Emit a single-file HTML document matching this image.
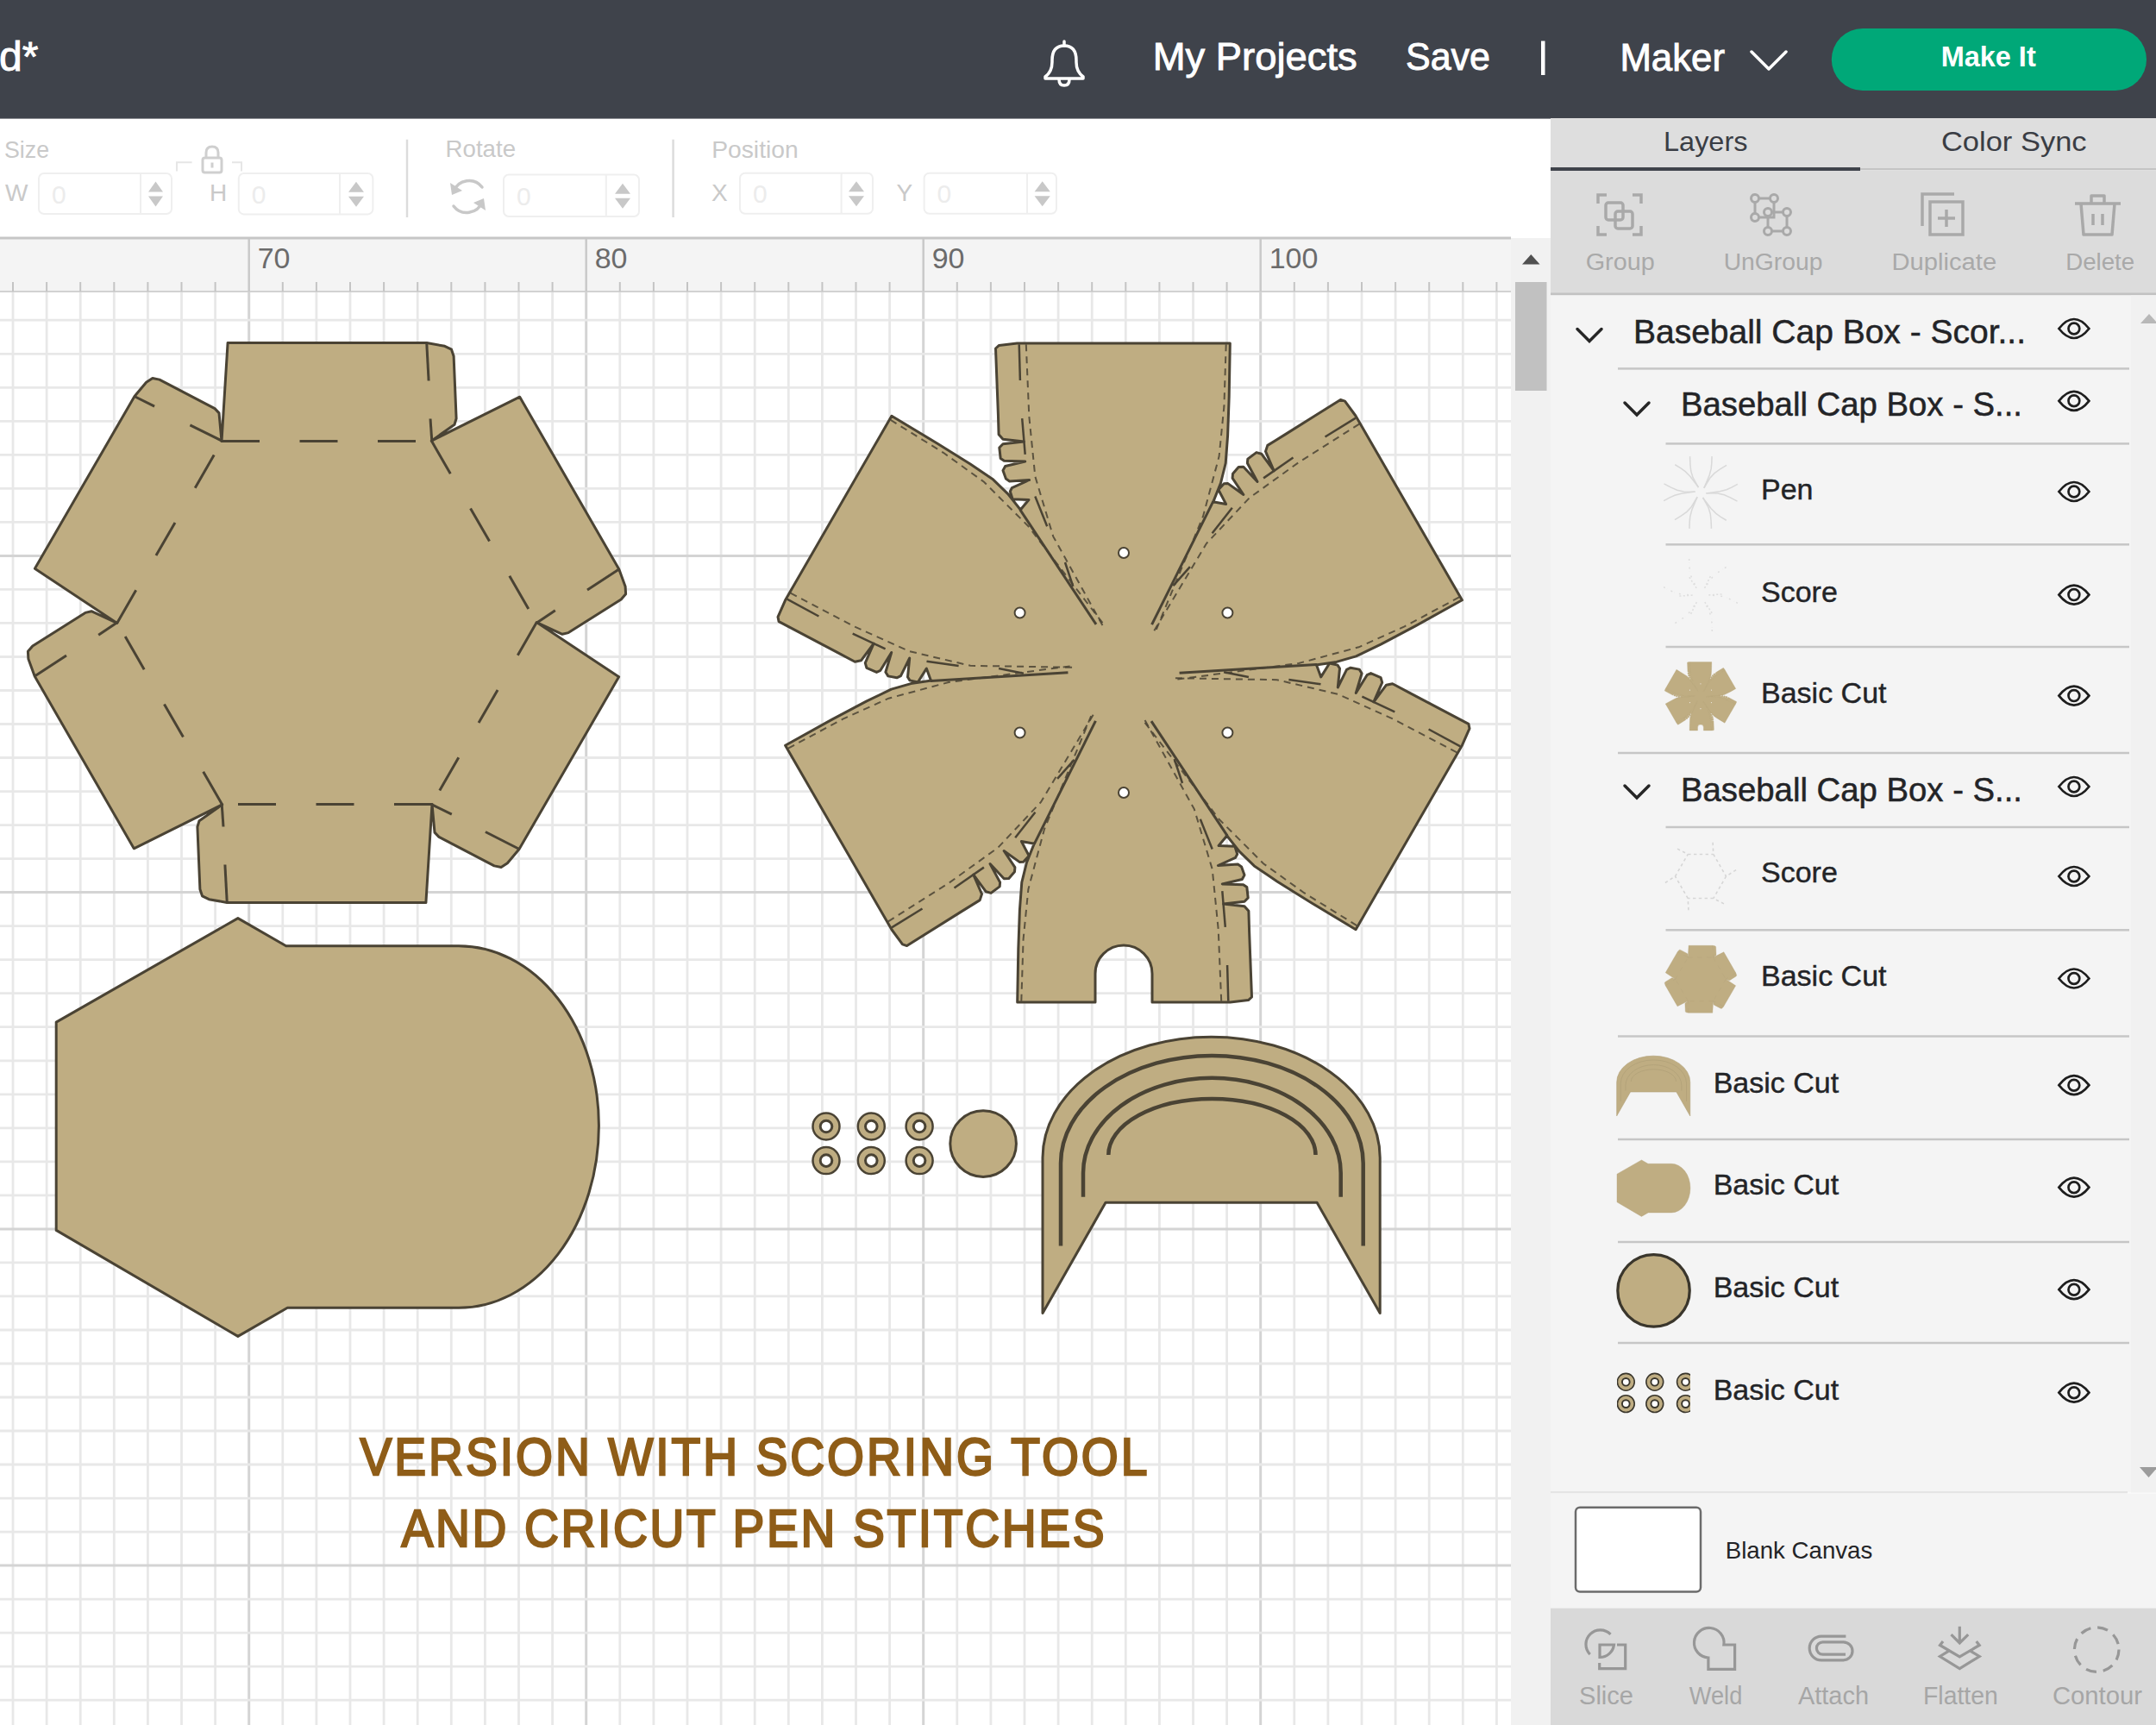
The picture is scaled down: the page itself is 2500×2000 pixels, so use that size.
<!DOCTYPE html>
<html><head><meta charset="utf-8">
<style>
html,body{margin:0;padding:0;}
body{width:2500px;height:2000px;overflow:hidden;position:relative;background:#fff;font-family:"Liberation Sans",sans-serif;}
svg{position:absolute;left:0;top:0;}
</style></head><body>
<svg width="2500" height="2000" viewBox="0 0 2500 2000">
<clipPath id="canclip"><rect x="0" y="338" width="1752" height="1662"/></clipPath>
<g id="grid"><line x1="15" y1="338" x2="15" y2="2000" stroke="#e8e8e8" stroke-width="2.8"/><line x1="54.1" y1="338" x2="54.1" y2="2000" stroke="#e8e8e8" stroke-width="2.8"/><line x1="93.2" y1="338" x2="93.2" y2="2000" stroke="#e8e8e8" stroke-width="2.8"/><line x1="132.3" y1="338" x2="132.3" y2="2000" stroke="#e8e8e8" stroke-width="2.8"/><line x1="171.4" y1="338" x2="171.4" y2="2000" stroke="#e8e8e8" stroke-width="2.8"/><line x1="210.5" y1="338" x2="210.5" y2="2000" stroke="#e8e8e8" stroke-width="2.8"/><line x1="249.6" y1="338" x2="249.6" y2="2000" stroke="#e8e8e8" stroke-width="2.8"/><line x1="288.7" y1="338" x2="288.7" y2="2000" stroke="#d4d4d4" stroke-width="3"/><line x1="327.8" y1="338" x2="327.8" y2="2000" stroke="#e8e8e8" stroke-width="2.8"/><line x1="366.9" y1="338" x2="366.9" y2="2000" stroke="#e8e8e8" stroke-width="2.8"/><line x1="406" y1="338" x2="406" y2="2000" stroke="#e8e8e8" stroke-width="2.8"/><line x1="445.1" y1="338" x2="445.1" y2="2000" stroke="#e8e8e8" stroke-width="2.8"/><line x1="484.2" y1="338" x2="484.2" y2="2000" stroke="#e8e8e8" stroke-width="2.8"/><line x1="523.3" y1="338" x2="523.3" y2="2000" stroke="#e8e8e8" stroke-width="2.8"/><line x1="562.4" y1="338" x2="562.4" y2="2000" stroke="#e8e8e8" stroke-width="2.8"/><line x1="601.5" y1="338" x2="601.5" y2="2000" stroke="#e8e8e8" stroke-width="2.8"/><line x1="640.6" y1="338" x2="640.6" y2="2000" stroke="#e8e8e8" stroke-width="2.8"/><line x1="679.7" y1="338" x2="679.7" y2="2000" stroke="#d4d4d4" stroke-width="3"/><line x1="718.8" y1="338" x2="718.8" y2="2000" stroke="#e8e8e8" stroke-width="2.8"/><line x1="757.9" y1="338" x2="757.9" y2="2000" stroke="#e8e8e8" stroke-width="2.8"/><line x1="797" y1="338" x2="797" y2="2000" stroke="#e8e8e8" stroke-width="2.8"/><line x1="836.1" y1="338" x2="836.1" y2="2000" stroke="#e8e8e8" stroke-width="2.8"/><line x1="875.2" y1="338" x2="875.2" y2="2000" stroke="#e8e8e8" stroke-width="2.8"/><line x1="914.3" y1="338" x2="914.3" y2="2000" stroke="#e8e8e8" stroke-width="2.8"/><line x1="953.4" y1="338" x2="953.4" y2="2000" stroke="#e8e8e8" stroke-width="2.8"/><line x1="992.5" y1="338" x2="992.5" y2="2000" stroke="#e8e8e8" stroke-width="2.8"/><line x1="1031.6" y1="338" x2="1031.6" y2="2000" stroke="#e8e8e8" stroke-width="2.8"/><line x1="1070.7" y1="338" x2="1070.7" y2="2000" stroke="#d4d4d4" stroke-width="3"/><line x1="1109.8" y1="338" x2="1109.8" y2="2000" stroke="#e8e8e8" stroke-width="2.8"/><line x1="1148.9" y1="338" x2="1148.9" y2="2000" stroke="#e8e8e8" stroke-width="2.8"/><line x1="1188" y1="338" x2="1188" y2="2000" stroke="#e8e8e8" stroke-width="2.8"/><line x1="1227.1" y1="338" x2="1227.1" y2="2000" stroke="#e8e8e8" stroke-width="2.8"/><line x1="1266.2" y1="338" x2="1266.2" y2="2000" stroke="#e8e8e8" stroke-width="2.8"/><line x1="1305.3" y1="338" x2="1305.3" y2="2000" stroke="#e8e8e8" stroke-width="2.8"/><line x1="1344.4" y1="338" x2="1344.4" y2="2000" stroke="#e8e8e8" stroke-width="2.8"/><line x1="1383.5" y1="338" x2="1383.5" y2="2000" stroke="#e8e8e8" stroke-width="2.8"/><line x1="1422.6" y1="338" x2="1422.6" y2="2000" stroke="#e8e8e8" stroke-width="2.8"/><line x1="1461.7" y1="338" x2="1461.7" y2="2000" stroke="#d4d4d4" stroke-width="3"/><line x1="1500.8" y1="338" x2="1500.8" y2="2000" stroke="#e8e8e8" stroke-width="2.8"/><line x1="1539.9" y1="338" x2="1539.9" y2="2000" stroke="#e8e8e8" stroke-width="2.8"/><line x1="1579" y1="338" x2="1579" y2="2000" stroke="#e8e8e8" stroke-width="2.8"/><line x1="1618.1" y1="338" x2="1618.1" y2="2000" stroke="#e8e8e8" stroke-width="2.8"/><line x1="1657.2" y1="338" x2="1657.2" y2="2000" stroke="#e8e8e8" stroke-width="2.8"/><line x1="1696.3" y1="338" x2="1696.3" y2="2000" stroke="#e8e8e8" stroke-width="2.8"/><line x1="1735.4" y1="338" x2="1735.4" y2="2000" stroke="#e8e8e8" stroke-width="2.8"/><line x1="0" y1="371.2" x2="1752" y2="371.2" stroke="#e8e8e8" stroke-width="2.8"/><line x1="0" y1="410.3" x2="1752" y2="410.3" stroke="#e8e8e8" stroke-width="2.8"/><line x1="0" y1="449.3" x2="1752" y2="449.3" stroke="#e8e8e8" stroke-width="2.8"/><line x1="0" y1="488.3" x2="1752" y2="488.3" stroke="#e8e8e8" stroke-width="2.8"/><line x1="0" y1="527.3" x2="1752" y2="527.3" stroke="#e8e8e8" stroke-width="2.8"/><line x1="0" y1="566.4" x2="1752" y2="566.4" stroke="#e8e8e8" stroke-width="2.8"/><line x1="0" y1="605.4" x2="1752" y2="605.4" stroke="#e8e8e8" stroke-width="2.8"/><line x1="0" y1="644.4" x2="1752" y2="644.4" stroke="#d4d4d4" stroke-width="3"/><line x1="0" y1="683.4" x2="1752" y2="683.4" stroke="#e8e8e8" stroke-width="2.8"/><line x1="0" y1="722.4" x2="1752" y2="722.4" stroke="#e8e8e8" stroke-width="2.8"/><line x1="0" y1="761.5" x2="1752" y2="761.5" stroke="#e8e8e8" stroke-width="2.8"/><line x1="0" y1="800.5" x2="1752" y2="800.5" stroke="#e8e8e8" stroke-width="2.8"/><line x1="0" y1="839.5" x2="1752" y2="839.5" stroke="#e8e8e8" stroke-width="2.8"/><line x1="0" y1="878.5" x2="1752" y2="878.5" stroke="#e8e8e8" stroke-width="2.8"/><line x1="0" y1="917.6" x2="1752" y2="917.6" stroke="#e8e8e8" stroke-width="2.8"/><line x1="0" y1="956.6" x2="1752" y2="956.6" stroke="#e8e8e8" stroke-width="2.8"/><line x1="0" y1="995.6" x2="1752" y2="995.6" stroke="#e8e8e8" stroke-width="2.8"/><line x1="0" y1="1034.6" x2="1752" y2="1034.6" stroke="#d4d4d4" stroke-width="3"/><line x1="0" y1="1073.7" x2="1752" y2="1073.7" stroke="#e8e8e8" stroke-width="2.8"/><line x1="0" y1="1112.7" x2="1752" y2="1112.7" stroke="#e8e8e8" stroke-width="2.8"/><line x1="0" y1="1151.7" x2="1752" y2="1151.7" stroke="#e8e8e8" stroke-width="2.8"/><line x1="0" y1="1190.7" x2="1752" y2="1190.7" stroke="#e8e8e8" stroke-width="2.8"/><line x1="0" y1="1229.8" x2="1752" y2="1229.8" stroke="#e8e8e8" stroke-width="2.8"/><line x1="0" y1="1268.8" x2="1752" y2="1268.8" stroke="#e8e8e8" stroke-width="2.8"/><line x1="0" y1="1307.8" x2="1752" y2="1307.8" stroke="#e8e8e8" stroke-width="2.8"/><line x1="0" y1="1346.8" x2="1752" y2="1346.8" stroke="#e8e8e8" stroke-width="2.8"/><line x1="0" y1="1385.9" x2="1752" y2="1385.9" stroke="#e8e8e8" stroke-width="2.8"/><line x1="0" y1="1424.9" x2="1752" y2="1424.9" stroke="#d4d4d4" stroke-width="3"/><line x1="0" y1="1463.9" x2="1752" y2="1463.9" stroke="#e8e8e8" stroke-width="2.8"/><line x1="0" y1="1502.9" x2="1752" y2="1502.9" stroke="#e8e8e8" stroke-width="2.8"/><line x1="0" y1="1542" x2="1752" y2="1542" stroke="#e8e8e8" stroke-width="2.8"/><line x1="0" y1="1581" x2="1752" y2="1581" stroke="#e8e8e8" stroke-width="2.8"/><line x1="0" y1="1620" x2="1752" y2="1620" stroke="#e8e8e8" stroke-width="2.8"/><line x1="0" y1="1659" x2="1752" y2="1659" stroke="#e8e8e8" stroke-width="2.8"/><line x1="0" y1="1698" x2="1752" y2="1698" stroke="#e8e8e8" stroke-width="2.8"/><line x1="0" y1="1737.1" x2="1752" y2="1737.1" stroke="#e8e8e8" stroke-width="2.8"/><line x1="0" y1="1776.1" x2="1752" y2="1776.1" stroke="#e8e8e8" stroke-width="2.8"/><line x1="0" y1="1815.1" x2="1752" y2="1815.1" stroke="#d4d4d4" stroke-width="3"/><line x1="0" y1="1854.1" x2="1752" y2="1854.1" stroke="#e8e8e8" stroke-width="2.8"/><line x1="0" y1="1893.2" x2="1752" y2="1893.2" stroke="#e8e8e8" stroke-width="2.8"/><line x1="0" y1="1932.2" x2="1752" y2="1932.2" stroke="#e8e8e8" stroke-width="2.8"/><line x1="0" y1="1971.2" x2="1752" y2="1971.2" stroke="#e8e8e8" stroke-width="2.8"/></g>
<defs><g id="hexbox"><path d="M257 511.5 L264.1 397.4 L494.8 397.6 L515.7 401.3 L523.5 405.2 L526.1 413 L529.1 485.2 L527 492.2 L500.3 511.1 L602.7 460.2 L717.8 660.1 L725.1 680 L725.6 688.7 L720.2 694.9 L659.1 733.6 L652 735.3 L622.3 721.6 L717.6 784.8 L602 984.5 L588.4 1000.7 L581.1 1005.5 L573.1 1003.9 L509 970.4 L504 965.1 L501 932.5 L493.9 1046.6 L263.2 1046.4 L242.3 1042.7 L234.5 1038.8 L231.9 1031 L228.9 958.8 L231 951.8 L257.7 932.9 L155.3 983.8 L40.2 783.9 L32.9 764 L32.4 755.3 L37.8 749.1 L98.9 710.4 L106 708.7 L135.7 722.4 L40.4 659.2 L156 459.5 L169.6 443.3 L176.9 438.5 L184.9 440.1 L249 473.6 L254 478.9 Z" fill="#bfad82" stroke="inherit" stroke-width="3" stroke-linejoin="round"/><path d="M257 511.5 L501 511.5" stroke="inherit" stroke-width="3" stroke-dasharray="44 46.5" fill="none"/><path d="M494.8 398.6 L497.1 441.5" stroke="inherit" stroke-width="3" fill="none"/><path d="M499 485.5 L500.8 511.5" stroke="inherit" stroke-width="3" fill="none"/><path d="M500.3 511.1 L622.3 722.4" stroke="inherit" stroke-width="3" stroke-dasharray="44 46.5" fill="none"/><path d="M717 660.6 L681 684" stroke="inherit" stroke-width="3" fill="none"/><path d="M643.8 707.7 L622.2 722.2" stroke="inherit" stroke-width="3" fill="none"/><path d="M622.3 721.6 L500.3 932.9" stroke="inherit" stroke-width="3" stroke-dasharray="44 46.5" fill="none"/><path d="M601.2 984 L562.9 964.5" stroke="inherit" stroke-width="3" fill="none"/><path d="M523.8 944.2 L500.4 932.7" stroke="inherit" stroke-width="3" fill="none"/><path d="M501 932.5 L257 932.5" stroke="inherit" stroke-width="3" stroke-dasharray="44 46.5" fill="none"/><path d="M263.2 1045.4 L260.9 1002.5" stroke="inherit" stroke-width="3" fill="none"/><path d="M259 958.5 L257.2 932.5" stroke="inherit" stroke-width="3" fill="none"/><path d="M257.7 932.9 L135.7 721.6" stroke="inherit" stroke-width="3" stroke-dasharray="44 46.5" fill="none"/><path d="M41 783.4 L77 760" stroke="inherit" stroke-width="3" fill="none"/><path d="M114.2 736.3 L135.8 721.8" stroke="inherit" stroke-width="3" fill="none"/><path d="M135.7 722.4 L257.7 511.1" stroke="inherit" stroke-width="3" stroke-dasharray="44 46.5" fill="none"/><path d="M156.8 460 L179.1 471.2" stroke="inherit" stroke-width="3" fill="none"/><path d="M220.4 492.8 L257.6 511.3" stroke="inherit" stroke-width="3" fill="none"/></g><g id="hexscore" fill="none"><path d="M257 511.5 L501 511.5"/><path d="M494.8 398.6 L500.8 511.5"/><path d="M500.3 511.1 L622.3 722.4"/><path d="M717 660.6 L622.2 722.2"/><path d="M622.3 721.6 L500.3 932.9"/><path d="M601.2 984 L500.4 932.7"/><path d="M501 932.5 L257 932.5"/><path d="M263.2 1045.4 L257.2 932.5"/><path d="M257.7 932.9 L135.7 721.6"/><path d="M41 783.4 L135.8 721.8"/><path d="M135.7 722.4 L257.7 511.1"/><path d="M156.8 460 L257.6 511.3"/></g><path id="lid" d="M65.2 1185.1 L275.9 1064.6 L331.7 1096.8 L532 1096.8 A162.4 208.2 0 0 1 694.4 1305 A162.4 211.3 0 0 1 532 1516.3 L333.3 1516.3 L275.9 1549.4 L65.2 1426.4 Z" fill="#bfad82" stroke="inherit" stroke-width="3" stroke-linejoin="round"/><g id="star"><path d="M1183.1 591.3 L1192.9 579.5 L1174.1 578.8 L1171.3 569.7 L1173.4 565.6 L1193.6 556.5 L1170.6 557.9 L1166.4 555.1 L1163 545.4 L1165.7 540.5 L1188.7 535 L1164.3 534.3 L1160.2 531.5 L1158.8 519 L1163 514.8 L1187.3 512 L1163 509.2 L1158.1 503.7 L1157.4 480 L1154.5 404 L1158.5 400.4 L1179.4 398.1 L1426.3 398.1 L1425.2 459.6 L1423.6 505 L1421.2 537 L1415.5 560 L1406.6 582.4 L1406.5 581.8 L1421.6 584.4 L1412.8 567.8 L1419.3 560.8 L1423.9 560.6 L1441.9 573.5 L1429.1 554.3 L1429.5 549.3 L1436.2 541.5 L1441.8 541.3 L1458 558.5 L1446.4 537 L1446.8 532.1 L1456.9 524.6 L1462.7 526.2 L1477.2 545.8 L1467.5 523.4 L1469.8 516.4 L1490 503.9 L1554.4 463.4 L1559.5 465.1 L1571.9 482 L1695.4 695.8 L1641.6 725.6 L1601.5 746.9 L1572.5 760.9 L1549.8 767.4 L1525.9 770.9 L1526.4 770.5 L1531.7 784.9 L1541.7 769 L1551 771.1 L1553.5 775 L1551.3 797 L1561.5 776.4 L1566.1 774.2 L1576.2 776.1 L1579.1 780.8 L1572.3 803.5 L1585.1 782.7 L1589.6 780.6 L1601.1 785.6 L1602.7 791.4 L1592.9 813.8 L1607.5 794.2 L1614.7 792.7 L1635.6 803.9 L1702.9 839.4 L1704 844.7 L1695.5 863.9 L1572.1 1077.7 L1519.4 1046 L1480.9 1021.9 L1454.3 1003.9 L1437.3 987.4 L1422.3 968.5 L1422.9 968.7 L1413.1 980.5 L1431.9 981.2 L1434.7 990.3 L1432.6 994.4 L1412.4 1003.5 L1435.4 1002.1 L1439.6 1004.9 L1443 1014.6 L1440.3 1019.5 L1417.3 1025 L1441.7 1025.7 L1445.8 1028.5 L1447.2 1041 L1443 1045.2 L1418.7 1048 L1443 1050.8 L1447.9 1056.3 L1448.6 1080 L1451.5 1156 L1447.5 1159.6 L1426.6 1161.9 L1336 1161.9 L1336 1128.9 A33 33 0 0 0 1270 1128.9 L1270 1161.9 L1179.7 1161.9 L1180.8 1100.4 L1182.4 1055 L1184.8 1023 L1190.5 1000 L1199.4 977.6 L1199.5 978.2 L1184.4 975.6 L1193.2 992.2 L1186.7 999.2 L1182.1 999.4 L1164.1 986.5 L1176.9 1005.7 L1176.5 1010.7 L1169.8 1018.5 L1164.2 1018.7 L1148 1001.5 L1159.6 1023 L1159.2 1027.9 L1149.1 1035.4 L1143.3 1033.8 L1128.8 1014.2 L1138.5 1036.6 L1136.2 1043.6 L1116 1056.1 L1051.6 1096.6 L1046.5 1094.9 L1034.1 1078 L910.6 864.2 L964.4 834.4 L1004.5 813.1 L1033.5 799.1 L1056.2 792.6 L1080.1 789.1 L1079.6 789.5 L1074.3 775.1 L1064.3 791 L1055 788.9 L1052.5 785 L1054.7 763 L1044.5 783.6 L1039.9 785.8 L1029.8 783.9 L1026.9 779.2 L1033.7 756.5 L1020.9 777.3 L1016.4 779.4 L1004.9 774.4 L1003.3 768.6 L1013.1 746.2 L998.5 765.8 L991.3 767.3 L970.4 756.1 L903.1 720.6 L902 715.3 L910.5 696.1 L1033.9 482.3 L1086.6 514 L1125.1 538.1 L1151.7 556.1 L1168.7 572.6 L1183.7 591.5 Z" fill="#bfad82" stroke="inherit" stroke-width="3" stroke-linejoin="round"/><path d="M1183.1 591.3 L1271 723.9" stroke="inherit" stroke-width="3" fill="none"/><path d="M1200.3 575.5 L1214.2 610.3" stroke="inherit" stroke-width="2.5" fill="none"/><path d="M1235 652 L1244.3 679.8" stroke="inherit" stroke-width="2.5" fill="none"/><path d="M1181.7 399.3 L1182.9 441" stroke="inherit" stroke-width="2.5" fill="none"/><path d="M1185.2 485.1 L1188.7 526.8" stroke="inherit" stroke-width="2.5" fill="none"/><path d="M1421.7 399.3 L1419.4 471.2 L1413.6 529.1 L1395 598.7 L1339.4 733.2" stroke="inherit" stroke-width="2" stroke-dasharray="8 6" fill="none" opacity="0.85"/><path d="M1189.8 399.3 L1193.3 482.7 L1200.3 552.3 L1221.2 621.9 L1279.1 726.2" stroke="inherit" stroke-width="2" stroke-dasharray="8 6" fill="none" opacity="0.85"/><circle cx="1303" cy="641" r="6" fill="#fff" stroke="inherit" stroke-width="2"/><path d="M1406.5 581.8 L1335.6 724.2" stroke="inherit" stroke-width="3" fill="none"/><path d="M1428.8 588.8 L1405.6 618.2" stroke="inherit" stroke-width="2.5" fill="none"/><path d="M1379.9 657.1 L1360.4 679.1" stroke="inherit" stroke-width="2.5" fill="none"/><path d="M1572 484.6 L1536.5 506.5" stroke="inherit" stroke-width="2.5" fill="none"/><path d="M1499.5 530.5 L1465.1 554.4" stroke="inherit" stroke-width="2.5" fill="none"/><path d="M1692 692.4 L1628.6 726.4 L1575.6 750.3 L1506 769 L1361.7 788.1" stroke="inherit" stroke-width="2" stroke-dasharray="8 6" fill="none" opacity="0.85"/><path d="M1576.1 491.6 L1505.6 536.3 L1448.8 577.2 L1399 630.1 L1337.6 732.4" stroke="inherit" stroke-width="2" stroke-dasharray="8 6" fill="none" opacity="0.85"/><circle cx="1423.4" cy="710.5" r="6" fill="#fff" stroke="inherit" stroke-width="2"/><path d="M1526.4 770.5 L1367.6 780.3" stroke="inherit" stroke-width="3" fill="none"/><path d="M1531.5 793.3 L1494.4 787.9" stroke="inherit" stroke-width="2.5" fill="none"/><path d="M1447.9 785.1 L1419.1 779.3" stroke="inherit" stroke-width="2.5" fill="none"/><path d="M1693.3 865.3 L1656.6 845.5" stroke="inherit" stroke-width="2.5" fill="none"/><path d="M1617.3 825.4 L1579.4 807.6" stroke="inherit" stroke-width="2.5" fill="none"/><path d="M1573.3 1073.1 L1512.2 1035.2 L1465 1001.2 L1414 950.3 L1325.3 834.9" stroke="inherit" stroke-width="2" stroke-dasharray="8 6" fill="none" opacity="0.85"/><path d="M1689.3 872.3 L1615.3 833.6 L1551.5 804.9 L1480.8 788.2 L1361.5 786.2" stroke="inherit" stroke-width="2" stroke-dasharray="8 6" fill="none" opacity="0.85"/><circle cx="1423.4" cy="849.5" r="6" fill="#fff" stroke="inherit" stroke-width="2"/><path d="M1422.9 968.7 L1335 836.1" stroke="inherit" stroke-width="3" fill="none"/><path d="M1405.7 984.5 L1391.8 949.7" stroke="inherit" stroke-width="2.5" fill="none"/><path d="M1371 908 L1361.7 880.2" stroke="inherit" stroke-width="2.5" fill="none"/><path d="M1424.3 1160.7 L1423.1 1119" stroke="inherit" stroke-width="2.5" fill="none"/><path d="M1420.8 1074.9 L1417.3 1033.2" stroke="inherit" stroke-width="2.5" fill="none"/><path d="M1184.3 1160.7 L1186.6 1088.8 L1192.4 1030.9 L1211 961.3 L1266.6 826.8" stroke="inherit" stroke-width="2" stroke-dasharray="8 6" fill="none" opacity="0.85"/><path d="M1416.2 1160.7 L1412.7 1077.3 L1405.7 1007.7 L1384.8 938.1 L1326.9 833.8" stroke="inherit" stroke-width="2" stroke-dasharray="8 6" fill="none" opacity="0.85"/><circle cx="1303" cy="919" r="6" fill="#fff" stroke="inherit" stroke-width="2"/><path d="M1199.5 978.2 L1270.4 835.8" stroke="inherit" stroke-width="3" fill="none"/><path d="M1177.2 971.2 L1200.4 941.8" stroke="inherit" stroke-width="2.5" fill="none"/><path d="M1226.1 902.9 L1245.6 880.9" stroke="inherit" stroke-width="2.5" fill="none"/><path d="M1034 1075.4 L1069.5 1053.5" stroke="inherit" stroke-width="2.5" fill="none"/><path d="M1106.5 1029.5 L1140.9 1005.6" stroke="inherit" stroke-width="2.5" fill="none"/><path d="M914 867.6 L977.4 833.6 L1030.4 809.7 L1100 791 L1244.3 771.9" stroke="inherit" stroke-width="2" stroke-dasharray="8 6" fill="none" opacity="0.85"/><path d="M1029.9 1068.4 L1100.4 1023.7 L1157.2 982.8 L1207 929.9 L1268.4 827.6" stroke="inherit" stroke-width="2" stroke-dasharray="8 6" fill="none" opacity="0.85"/><circle cx="1182.6" cy="849.5" r="6" fill="#fff" stroke="inherit" stroke-width="2"/><path d="M1079.6 789.5 L1238.4 779.7" stroke="inherit" stroke-width="3" fill="none"/><path d="M1074.5 766.7 L1111.6 772.1" stroke="inherit" stroke-width="2.5" fill="none"/><path d="M1158.1 774.9 L1186.9 780.7" stroke="inherit" stroke-width="2.5" fill="none"/><path d="M912.7 694.7 L949.4 714.5" stroke="inherit" stroke-width="2.5" fill="none"/><path d="M988.7 734.6 L1026.6 752.4" stroke="inherit" stroke-width="2.5" fill="none"/><path d="M1032.7 486.9 L1093.8 524.8 L1141 558.8 L1192 609.7 L1280.7 725.1" stroke="inherit" stroke-width="2" stroke-dasharray="8 6" fill="none" opacity="0.85"/><path d="M916.7 687.7 L990.7 726.4 L1054.5 755.1 L1125.2 771.8 L1244.5 773.8" stroke="inherit" stroke-width="2" stroke-dasharray="8 6" fill="none" opacity="0.85"/><circle cx="1182.6" cy="710.5" r="6" fill="#fff" stroke="inherit" stroke-width="2"/></g><g id="penlines" fill="none"><path d="M1421.7 399.3 L1419.4 471.2 L1413.6 529.1 L1395 598.7 L1339.4 733.2"/><path d="M1189.8 399.3 L1193.3 482.7 L1200.3 552.3 L1221.2 621.9 L1279.1 726.2"/><path d="M1692 692.4 L1628.6 726.4 L1575.6 750.3 L1506 769 L1361.7 788.1"/><path d="M1576.1 491.6 L1505.6 536.3 L1448.8 577.2 L1399 630.1 L1337.6 732.4"/><path d="M1573.3 1073.1 L1512.2 1035.2 L1465 1001.2 L1414 950.3 L1325.3 834.9"/><path d="M1689.3 872.3 L1615.3 833.6 L1551.5 804.9 L1480.8 788.2 L1361.5 786.2"/><path d="M1184.3 1160.7 L1186.6 1088.8 L1192.4 1030.9 L1211 961.3 L1266.6 826.8"/><path d="M1416.2 1160.7 L1412.7 1077.3 L1405.7 1007.7 L1384.8 938.1 L1326.9 833.8"/><path d="M914 867.6 L977.4 833.6 L1030.4 809.7 L1100 791 L1244.3 771.9"/><path d="M1029.9 1068.4 L1100.4 1023.7 L1157.2 982.8 L1207 929.9 L1268.4 827.6"/><path d="M1032.7 486.9 L1093.8 524.8 L1141 558.8 L1192 609.7 L1280.7 725.1"/><path d="M916.7 687.7 L990.7 726.4 L1054.5 755.1 L1125.2 771.8 L1244.5 773.8"/></g><g id="scorelines" fill="none"><path d="M1200.3 575.5 L1214.2 610.3"/><path d="M1235 652 L1244.3 679.8"/><path d="M1181.7 399.3 L1182.9 441"/><path d="M1185.2 485.1 L1188.7 526.8"/><path d="M1183.1 591.3 L1271 723.9"/><path d="M1428.8 588.8 L1405.6 618.2"/><path d="M1379.9 657.1 L1360.4 679.1"/><path d="M1572 484.6 L1536.5 506.5"/><path d="M1499.5 530.5 L1465.1 554.4"/><path d="M1406.5 581.8 L1335.6 724.2"/><path d="M1531.5 793.3 L1494.4 787.9"/><path d="M1447.9 785.1 L1419.1 779.3"/><path d="M1693.3 865.3 L1656.6 845.5"/><path d="M1617.3 825.4 L1579.4 807.6"/><path d="M1526.4 770.5 L1367.6 780.3"/><path d="M1405.7 984.5 L1391.8 949.7"/><path d="M1371 908 L1361.7 880.2"/><path d="M1424.3 1160.7 L1423.1 1119"/><path d="M1420.8 1074.9 L1417.3 1033.2"/><path d="M1422.9 968.7 L1335 836.1"/><path d="M1177.2 971.2 L1200.4 941.8"/><path d="M1226.1 902.9 L1245.6 880.9"/><path d="M1034 1075.4 L1069.5 1053.5"/><path d="M1106.5 1029.5 L1140.9 1005.6"/><path d="M1199.5 978.2 L1270.4 835.8"/><path d="M1074.5 766.7 L1111.6 772.1"/><path d="M1158.1 774.9 L1186.9 780.7"/><path d="M912.7 694.7 L949.4 714.5"/><path d="M988.7 734.6 L1026.6 752.4"/><path d="M1079.6 789.5 L1238.4 779.7"/></g><g id="visor"><path d="M1209 1522.5 L1209 1342.3 A195.6 140.3 0 0 1 1600.2 1342.3 L1600.2 1522.5 L1527.1 1394.3 L1282 1394.3 Z" fill="#bfad82" stroke="inherit" stroke-width="3" stroke-linejoin="round"/><path d="M1230 1444.6 L1230 1348.8 A175.35 125 0 0 1 1580.7 1348.8 L1580.7 1444.6" fill="none" stroke="inherit" stroke-width="4.5"/><path d="M1256 1387.8 L1256 1360 A149.35 110.2 0 0 1 1554.7 1360 L1554.7 1387.8" fill="none" stroke="inherit" stroke-width="4.5"/><path d="M1285.3 1339 A120.1 65 0 0 1 1525.5 1339" fill="none" stroke="inherit" stroke-width="4.5"/></g><g id="dots"><circle cx="958" cy="1306" r="15.5" fill="#bfad82" stroke="inherit" stroke-width="2.5"/><circle cx="958" cy="1306" r="6.8" fill="#fff" stroke="inherit" stroke-width="3"/><circle cx="958" cy="1345.6" r="15.5" fill="#bfad82" stroke="inherit" stroke-width="2.5"/><circle cx="958" cy="1345.6" r="6.8" fill="#fff" stroke="inherit" stroke-width="3"/><circle cx="1010.3" cy="1306" r="15.5" fill="#bfad82" stroke="inherit" stroke-width="2.5"/><circle cx="1010.3" cy="1306" r="6.8" fill="#fff" stroke="inherit" stroke-width="3"/><circle cx="1010.3" cy="1345.6" r="15.5" fill="#bfad82" stroke="inherit" stroke-width="2.5"/><circle cx="1010.3" cy="1345.6" r="6.8" fill="#fff" stroke="inherit" stroke-width="3"/><circle cx="1066.1" cy="1306" r="15.5" fill="#bfad82" stroke="inherit" stroke-width="2.5"/><circle cx="1066.1" cy="1306" r="6.8" fill="#fff" stroke="inherit" stroke-width="3"/><circle cx="1066.1" cy="1345.6" r="15.5" fill="#bfad82" stroke="inherit" stroke-width="2.5"/><circle cx="1066.1" cy="1345.6" r="6.8" fill="#fff" stroke="inherit" stroke-width="3"/></g><circle id="circ" cx="1140.1" cy="1326.1" r="38.3" fill="#bfad82" stroke="inherit" stroke-width="3"/></defs>
<g clip-path="url(#canclip)">
<g stroke="#4a4334"><use href="#hexbox"/><use href="#lid"/><use href="#star"/><use href="#visor"/><use href="#dots"/><use href="#circ"/></g>
<text transform="scale(0.89 1)" x="469.1" y="1709.8" font-family="Liberation Sans" font-size="62" fill="#8f5d18" stroke="#8f5d18" stroke-width="2.5" textLength="1025.8" lengthAdjust="spacing">VERSION WITH SCORING TOOL</text>
<text transform="scale(0.89 1)" x="523.0" y="1792.8" font-family="Liberation Sans" font-size="62" fill="#8f5d18" stroke="#8f5d18" stroke-width="2.5" textLength="915.7" lengthAdjust="spacing">AND CRICUT PEN STITCHES</text>
</g>
<rect x="0" y="276" width="1752" height="62" fill="#f4f4f4"/>
<rect x="0" y="274.5" width="1752" height="3" fill="#c6c6c6"/>
<rect x="0" y="337" width="1752" height="2" fill="#d2d2d2"/>
<line x1="15" y1="327" x2="15" y2="338" stroke="#c4c4c4" stroke-width="2"/>
<line x1="54.1" y1="327" x2="54.1" y2="338" stroke="#c4c4c4" stroke-width="2"/>
<line x1="93.2" y1="327" x2="93.2" y2="338" stroke="#c4c4c4" stroke-width="2"/>
<line x1="132.3" y1="327" x2="132.3" y2="338" stroke="#c4c4c4" stroke-width="2"/>
<line x1="171.4" y1="327" x2="171.4" y2="338" stroke="#c4c4c4" stroke-width="2"/>
<line x1="210.5" y1="327" x2="210.5" y2="338" stroke="#c4c4c4" stroke-width="2"/>
<line x1="249.6" y1="327" x2="249.6" y2="338" stroke="#c4c4c4" stroke-width="2"/>
<line x1="288.7" y1="277" x2="288.7" y2="338" stroke="#c9c9c9" stroke-width="2.5"/>
<text x="298.7" y="310.6" font-family="Liberation Sans" font-size="34" fill="#6b6b6b">70</text>
<line x1="327.8" y1="327" x2="327.8" y2="338" stroke="#c4c4c4" stroke-width="2"/>
<line x1="366.9" y1="327" x2="366.9" y2="338" stroke="#c4c4c4" stroke-width="2"/>
<line x1="406" y1="327" x2="406" y2="338" stroke="#c4c4c4" stroke-width="2"/>
<line x1="445.1" y1="327" x2="445.1" y2="338" stroke="#c4c4c4" stroke-width="2"/>
<line x1="484.2" y1="327" x2="484.2" y2="338" stroke="#c4c4c4" stroke-width="2"/>
<line x1="523.3" y1="327" x2="523.3" y2="338" stroke="#c4c4c4" stroke-width="2"/>
<line x1="562.4" y1="327" x2="562.4" y2="338" stroke="#c4c4c4" stroke-width="2"/>
<line x1="601.5" y1="327" x2="601.5" y2="338" stroke="#c4c4c4" stroke-width="2"/>
<line x1="640.6" y1="327" x2="640.6" y2="338" stroke="#c4c4c4" stroke-width="2"/>
<line x1="679.7" y1="277" x2="679.7" y2="338" stroke="#c9c9c9" stroke-width="2.5"/>
<text x="689.7" y="310.6" font-family="Liberation Sans" font-size="34" fill="#6b6b6b">80</text>
<line x1="718.8" y1="327" x2="718.8" y2="338" stroke="#c4c4c4" stroke-width="2"/>
<line x1="757.9" y1="327" x2="757.9" y2="338" stroke="#c4c4c4" stroke-width="2"/>
<line x1="797" y1="327" x2="797" y2="338" stroke="#c4c4c4" stroke-width="2"/>
<line x1="836.1" y1="327" x2="836.1" y2="338" stroke="#c4c4c4" stroke-width="2"/>
<line x1="875.2" y1="327" x2="875.2" y2="338" stroke="#c4c4c4" stroke-width="2"/>
<line x1="914.3" y1="327" x2="914.3" y2="338" stroke="#c4c4c4" stroke-width="2"/>
<line x1="953.4" y1="327" x2="953.4" y2="338" stroke="#c4c4c4" stroke-width="2"/>
<line x1="992.5" y1="327" x2="992.5" y2="338" stroke="#c4c4c4" stroke-width="2"/>
<line x1="1031.6" y1="327" x2="1031.6" y2="338" stroke="#c4c4c4" stroke-width="2"/>
<line x1="1070.7" y1="277" x2="1070.7" y2="338" stroke="#c9c9c9" stroke-width="2.5"/>
<text x="1080.7" y="310.6" font-family="Liberation Sans" font-size="34" fill="#6b6b6b">90</text>
<line x1="1109.8" y1="327" x2="1109.8" y2="338" stroke="#c4c4c4" stroke-width="2"/>
<line x1="1148.9" y1="327" x2="1148.9" y2="338" stroke="#c4c4c4" stroke-width="2"/>
<line x1="1188" y1="327" x2="1188" y2="338" stroke="#c4c4c4" stroke-width="2"/>
<line x1="1227.1" y1="327" x2="1227.1" y2="338" stroke="#c4c4c4" stroke-width="2"/>
<line x1="1266.2" y1="327" x2="1266.2" y2="338" stroke="#c4c4c4" stroke-width="2"/>
<line x1="1305.3" y1="327" x2="1305.3" y2="338" stroke="#c4c4c4" stroke-width="2"/>
<line x1="1344.4" y1="327" x2="1344.4" y2="338" stroke="#c4c4c4" stroke-width="2"/>
<line x1="1383.5" y1="327" x2="1383.5" y2="338" stroke="#c4c4c4" stroke-width="2"/>
<line x1="1422.6" y1="327" x2="1422.6" y2="338" stroke="#c4c4c4" stroke-width="2"/>
<line x1="1461.7" y1="277" x2="1461.7" y2="338" stroke="#c9c9c9" stroke-width="2.5"/>
<text x="1471.7" y="310.6" font-family="Liberation Sans" font-size="34" fill="#6b6b6b">100</text>
<line x1="1500.8" y1="327" x2="1500.8" y2="338" stroke="#c4c4c4" stroke-width="2"/>
<line x1="1539.9" y1="327" x2="1539.9" y2="338" stroke="#c4c4c4" stroke-width="2"/>
<line x1="1579" y1="327" x2="1579" y2="338" stroke="#c4c4c4" stroke-width="2"/>
<line x1="1618.1" y1="327" x2="1618.1" y2="338" stroke="#c4c4c4" stroke-width="2"/>
<line x1="1657.2" y1="327" x2="1657.2" y2="338" stroke="#c4c4c4" stroke-width="2"/>
<line x1="1696.3" y1="327" x2="1696.3" y2="338" stroke="#c4c4c4" stroke-width="2"/>
<line x1="1735.4" y1="327" x2="1735.4" y2="338" stroke="#c4c4c4" stroke-width="2"/>
<rect x="1752" y="276" width="46" height="1724" fill="#f1f1f1"/>
<path d="M1765 306.5 L1775.3 295 L1785.5 306.5 Z" fill="#505050"/>
<rect x="1757" y="327" width="36.5" height="126" fill="#c1c1c1"/>
<rect x="0" y="0" width="2500" height="137.6" fill="#3f434b"/>
<text x="-1" y="82" font-family="Liberation Sans" font-size="48" fill="#fff" stroke="#fff" stroke-width="0.9">d*</text>
<g fill="none" stroke="#fff" stroke-width="3.5" stroke-linejoin="round" stroke-linecap="round"><path d="M1234 48 L1234 53"/><path d="M1212 91 L1212 89 Q1220 83 1220 72 L1220 70 Q1220 53 1234 53 Q1248 53 1248 70 L1248 72 Q1248 83 1256 89 L1256 91 Z"/><path d="M1228 92 Q1228 99 1234 99 Q1240 99 1240 92"/></g>
<text x="1336.7" y="81" font-family="Liberation Sans" font-size="45" fill="#fff" stroke="#fff" stroke-width="0.9" textLength="237" lengthAdjust="spacingAndGlyphs">My Projects</text>
<text x="1630" y="81" font-family="Liberation Sans" font-size="45" fill="#fff" stroke="#fff" stroke-width="0.9" textLength="98" lengthAdjust="spacingAndGlyphs">Save</text>
<rect x="1787" y="47.5" width="4.5" height="39.5" fill="#fff"/>
<text x="1878.4" y="81.8" font-family="Liberation Sans" font-size="45" fill="#fff" stroke="#fff" stroke-width="0.9" textLength="121.6" lengthAdjust="spacingAndGlyphs">Maker</text>
<path d="M2031 60 L2051 80 L2071 60" fill="none" stroke="#fff" stroke-width="3.5" stroke-linecap="round" stroke-linejoin="round"/>
<rect x="2123.8" y="33" width="365.2" height="72" rx="36" fill="#00a878"/>
<text x="2250.7" y="76.6" font-family="Liberation Sans" font-size="33.5" fill="#fff" font-weight="bold" textLength="110" lengthAdjust="spacingAndGlyphs">Make It</text>
<text x="5" y="183" font-family="Liberation Sans" font-size="28" fill="#c9c9c9" textLength="52" lengthAdjust="spacingAndGlyphs">Size</text>
<text x="6" y="233" font-family="Liberation Sans" font-size="28" fill="#c9c9c9">W</text>
<text x="243" y="233" font-family="Liberation Sans" font-size="28" fill="#c9c9c9">H</text>
<path d="M205 198.5 L205 188.3 L222.6 188.3 M269 188.3 L280 188.3 L280 198.5" fill="none" stroke="#e6e6e6" stroke-width="2"/>
<g fill="none" stroke="#cfcfcf" stroke-width="3"><rect x="235" y="183" width="22" height="17" rx="2.5"/><path d="M239 183 L239 177 Q239 170 246 170 Q253 170 253 177 L253 183"/></g><rect x="244.5" y="188.5" width="3" height="6" fill="#cfcfcf"/>
<rect x="45" y="201" width="154" height="47" rx="6" fill="#fff" stroke="#efefef" stroke-width="2"/><line x1="163" y1="201" x2="163" y2="248" stroke="#efefef" stroke-width="2"/><path d="M172 222.5 L180.5 210.5 L189 222.5 Z M172 227.5 L180.5 239.5 L189 227.5 Z" fill="#c8c8c8"/><text x="60" y="235.5" font-family="Liberation Sans" font-size="30" fill="#ececec">0</text>
<rect x="276.8" y="201" width="155.59999999999997" height="47.400000000000006" rx="6" fill="#fff" stroke="#efefef" stroke-width="2"/><line x1="394" y1="201" x2="394" y2="248.4" stroke="#efefef" stroke-width="2"/><path d="M404 222.7 L413.0 210.7 L422 222.7 Z M404 227.7 L413.0 239.7 L422 227.7 Z" fill="#c8c8c8"/><text x="291.8" y="235.7" font-family="Liberation Sans" font-size="30" fill="#ececec">0</text>
<line x1="472" y1="161.7" x2="472" y2="252" stroke="#dcdcdc" stroke-width="2.5"/>
<text x="516.6" y="182" font-family="Liberation Sans" font-size="28" fill="#c9c9c9" textLength="81.4" lengthAdjust="spacingAndGlyphs">Rotate</text>
<g fill="none" stroke="#c8c8c8" stroke-width="3.5" stroke-linecap="round"><path d="M526 222 A19 19 0 0 1 559 217"/><path d="M559 234 A19 19 0 0 1 526 239"/></g><path d="M522 212 L524 226 L536 221 Z M563 244 L561 230 L549 235 Z" fill="#c8c8c8"/>
<rect x="584" y="202.5" width="157" height="48.5" rx="6" fill="#fff" stroke="#efefef" stroke-width="2"/><line x1="702.8" y1="202.5" x2="702.8" y2="251" stroke="#efefef" stroke-width="2"/><path d="M713 224.75 L722.0 212.75 L731 224.75 Z M713 229.75 L722.0 241.75 L731 229.75 Z" fill="#c8c8c8"/><text x="599" y="237.75" font-family="Liberation Sans" font-size="30" fill="#ececec">0</text>
<line x1="780.6" y1="161.7" x2="780.6" y2="252" stroke="#dcdcdc" stroke-width="2.5"/>
<text x="825.2" y="182.7" font-family="Liberation Sans" font-size="28" fill="#c9c9c9" textLength="100.5" lengthAdjust="spacingAndGlyphs">Position</text>
<text x="825" y="233" font-family="Liberation Sans" font-size="28" fill="#c9c9c9">X</text>
<rect x="858" y="200.8" width="154" height="46.89999999999998" rx="6" fill="#fff" stroke="#efefef" stroke-width="2"/><line x1="975.6" y1="200.8" x2="975.6" y2="247.7" stroke="#efefef" stroke-width="2"/><path d="M984 222.25 L993.0 210.25 L1002 222.25 Z M984 227.25 L993.0 239.25 L1002 227.25 Z" fill="#c8c8c8"/><text x="873" y="235.25" font-family="Liberation Sans" font-size="30" fill="#ececec">0</text>
<text x="1039.6" y="233" font-family="Liberation Sans" font-size="28" fill="#c9c9c9">Y</text>
<rect x="1071.6" y="200.8" width="153.4000000000001" height="46.89999999999998" rx="6" fill="#fff" stroke="#efefef" stroke-width="2"/><line x1="1191" y1="200.8" x2="1191" y2="247.7" stroke="#efefef" stroke-width="2"/><path d="M1199.6 222.25 L1208.6999999999998 210.25 L1217.8 222.25 Z M1199.6 227.25 L1208.6999999999998 239.25 L1217.8 227.25 Z" fill="#c8c8c8"/><text x="1086.6" y="235.25" font-family="Liberation Sans" font-size="30" fill="#ececec">0</text>
<rect x="1798" y="137" width="702" height="60" fill="#dedede"/>
<text x="1929" y="174.5" font-family="Liberation Sans" font-size="32" fill="#3a3d44" textLength="97.5" lengthAdjust="spacingAndGlyphs">Layers</text>
<text x="2250.9" y="174.5" font-family="Liberation Sans" font-size="32" fill="#3a3d44" textLength="168.7" lengthAdjust="spacingAndGlyphs">Color Sync</text>
<rect x="2157" y="195" width="343" height="2.5" fill="#c4c4c4"/>
<rect x="1798" y="194" width="359" height="4" fill="#3f434b"/>
<rect x="1798" y="198" width="702" height="142" fill="#dcdcdc"/>
<rect x="1798" y="339.5" width="702" height="3" fill="#c2c2c2"/>
<text x="1838.7" y="312.6" font-family="Liberation Sans" font-size="27" fill="#a9a9a9" textLength="80" lengthAdjust="spacingAndGlyphs">Group</text>
<text x="1998.7" y="312.6" font-family="Liberation Sans" font-size="27" fill="#a9a9a9" textLength="114.8" lengthAdjust="spacingAndGlyphs">UnGroup</text>
<text x="2193.5" y="312.6" font-family="Liberation Sans" font-size="27" fill="#a9a9a9" textLength="121.7" lengthAdjust="spacingAndGlyphs">Duplicate</text>
<text x="2395.2" y="312.6" font-family="Liberation Sans" font-size="27" fill="#a9a9a9" textLength="80" lengthAdjust="spacingAndGlyphs">Delete</text>
<g fill="none" stroke="#a9a9a9" stroke-width="3.5"><path d="M1853 236 L1853 226 L1863 226 M1893 226 L1903 226 L1903 236 M1903 262 L1903 272 L1893 272 M1863 272 L1853 272 L1853 262"/><rect x="1862" y="235" width="20" height="20" rx="3"/><rect x="1873" y="245" width="20" height="20" rx="3"/></g>
<g fill="none" stroke="#a9a9a9" stroke-width="3"><rect x="2035" y="230" width="22" height="22"/><rect x="2050" y="246" width="22" height="22"/></g>
<g fill="#dcdcdc" stroke="#a9a9a9" stroke-width="3"><circle cx="2035" cy="230" r="4.5"/><circle cx="2057" cy="230" r="4.5"/><circle cx="2035" cy="252" r="4.5"/><circle cx="2050" cy="246" r="4.5"/><circle cx="2072" cy="246" r="4.5"/><circle cx="2050" cy="268" r="4.5"/><circle cx="2072" cy="268" r="4.5"/></g>
<g fill="none" stroke="#a9a9a9" stroke-width="3.5"><path d="M2229 262 L2229 225 L2266 225"/><rect x="2238" y="234" width="38" height="38"/><path d="M2257 243 L2257 263 M2247 253 L2267 253"/></g>
<g fill="none" stroke="#a9a9a9" stroke-width="3.5" stroke-linejoin="round"><path d="M2406 236 L2459 236"/><path d="M2425 236 L2425 227 L2440 227 L2440 236"/><path d="M2413 236 L2416 272 L2449 272 L2452 236"/><path d="M2427 248 L2427 261 M2438 248 L2438 261"/></g>
<rect x="1798" y="342.5" width="702" height="1388" fill="#f4f4f4"/>
<rect x="2471" y="342.5" width="29" height="1388" fill="#f1f1f1"/>
<path d="M2482 375 L2492 364 L2502 375 Z" fill="#b8b8b8"/>
<path d="M2481 1701 L2491.5 1713 L2502 1701 Z" fill="#9c9c9c"/>
<text x="1894" y="398" font-family="Liberation Sans" font-size="38.5" fill="#232427" stroke="#232427" stroke-width="0.5" textLength="455" lengthAdjust="spacingAndGlyphs">Baseball Cap Box - Scor...</text>
<path d="M1829 381.5 L1843 395.5 L1857 381.5" fill="none" stroke="#262626" stroke-width="3.5" stroke-linecap="round"/>
<g fill="none" stroke="#1e1e1e" stroke-width="2.7"><path d="M2387.4 381 Q2404.9 359 2422.4 381 Q2404.9 403 2387.4 381 Z"/><circle cx="2404.9" cy="381" r="6.4"/></g>
<text x="1949" y="482" font-family="Liberation Sans" font-size="38.5" fill="#232427" stroke="#232427" stroke-width="0.5" textLength="396" lengthAdjust="spacingAndGlyphs">Baseball Cap Box - S...</text>
<path d="M1884 467 L1898 481 L1912 467" fill="none" stroke="#262626" stroke-width="3.5" stroke-linecap="round"/>
<g fill="none" stroke="#1e1e1e" stroke-width="2.7"><path d="M2387.4 464.8 Q2404.9 442.8 2422.4 464.8 Q2404.9 486.8 2387.4 464.8 Z"/><circle cx="2404.9" cy="464.8" r="6.4"/></g>
<text x="2042" y="579" font-family="Liberation Sans" font-size="34" fill="#232427" stroke="#232427" stroke-width="0.4">Pen</text>
<g fill="none" stroke="#1e1e1e" stroke-width="2.7"><path d="M2387.4 570 Q2404.9 548 2422.4 570 Q2404.9 592 2387.4 570 Z"/><circle cx="2404.9" cy="570" r="6.4"/></g>
<text x="2042" y="697.5" font-family="Liberation Sans" font-size="34" fill="#232427" stroke="#232427" stroke-width="0.4">Score</text>
<g fill="none" stroke="#1e1e1e" stroke-width="2.7"><path d="M2387.4 689.6 Q2404.9 667.6 2422.4 689.6 Q2404.9 711.6 2387.4 689.6 Z"/><circle cx="2404.9" cy="689.6" r="6.4"/></g>
<text x="2042" y="815.3" font-family="Liberation Sans" font-size="34" fill="#232427" stroke="#232427" stroke-width="0.4">Basic Cut</text>
<g fill="none" stroke="#1e1e1e" stroke-width="2.7"><path d="M2387.4 806.6 Q2404.9 784.6 2422.4 806.6 Q2404.9 828.6 2387.4 806.6 Z"/><circle cx="2404.9" cy="806.6" r="6.4"/></g>
<text x="1949" y="929" font-family="Liberation Sans" font-size="38.5" fill="#232427" stroke="#232427" stroke-width="0.5" textLength="396" lengthAdjust="spacingAndGlyphs">Baseball Cap Box - S...</text>
<path d="M1884 911 L1898 925 L1912 911" fill="none" stroke="#262626" stroke-width="3.5" stroke-linecap="round"/>
<g fill="none" stroke="#1e1e1e" stroke-width="2.7"><path d="M2387.4 912 Q2404.9 890 2422.4 912 Q2404.9 934 2387.4 912 Z"/><circle cx="2404.9" cy="912" r="6.4"/></g>
<text x="2042" y="1023" font-family="Liberation Sans" font-size="34" fill="#232427" stroke="#232427" stroke-width="0.4">Score</text>
<g fill="none" stroke="#1e1e1e" stroke-width="2.7"><path d="M2387.4 1016 Q2404.9 994 2422.4 1016 Q2404.9 1038 2387.4 1016 Z"/><circle cx="2404.9" cy="1016" r="6.4"/></g>
<text x="2042" y="1143" font-family="Liberation Sans" font-size="34" fill="#232427" stroke="#232427" stroke-width="0.4">Basic Cut</text>
<g fill="none" stroke="#1e1e1e" stroke-width="2.7"><path d="M2387.4 1134.5 Q2404.9 1112.5 2422.4 1134.5 Q2404.9 1156.5 2387.4 1134.5 Z"/><circle cx="2404.9" cy="1134.5" r="6.4"/></g>
<text x="1986.7" y="1267" font-family="Liberation Sans" font-size="34" fill="#232427" stroke="#232427" stroke-width="0.4">Basic Cut</text>
<g fill="none" stroke="#1e1e1e" stroke-width="2.7"><path d="M2387.4 1258.2 Q2404.9 1236.2 2422.4 1258.2 Q2404.9 1280.2 2387.4 1258.2 Z"/><circle cx="2404.9" cy="1258.2" r="6.4"/></g>
<text x="1986.7" y="1385.4" font-family="Liberation Sans" font-size="34" fill="#232427" stroke="#232427" stroke-width="0.4">Basic Cut</text>
<g fill="none" stroke="#1e1e1e" stroke-width="2.7"><path d="M2387.4 1376.7 Q2404.9 1354.7 2422.4 1376.7 Q2404.9 1398.7 2387.4 1376.7 Z"/><circle cx="2404.9" cy="1376.7" r="6.4"/></g>
<text x="1986.7" y="1504" font-family="Liberation Sans" font-size="34" fill="#232427" stroke="#232427" stroke-width="0.4">Basic Cut</text>
<g fill="none" stroke="#1e1e1e" stroke-width="2.7"><path d="M2387.4 1495.2 Q2404.9 1473.2 2422.4 1495.2 Q2404.9 1517.2 2387.4 1495.2 Z"/><circle cx="2404.9" cy="1495.2" r="6.4"/></g>
<text x="1986.7" y="1623.4" font-family="Liberation Sans" font-size="34" fill="#232427" stroke="#232427" stroke-width="0.4">Basic Cut</text>
<g fill="none" stroke="#1e1e1e" stroke-width="2.7"><path d="M2387.4 1614.7 Q2404.9 1592.7 2422.4 1614.7 Q2404.9 1636.7 2387.4 1614.7 Z"/><circle cx="2404.9" cy="1614.7" r="6.4"/></g>
<rect x="1876" y="426.15" width="593" height="2.5" fill="#c6c6c6"/>
<rect x="1931.5" y="513.15" width="537.5" height="2.5" fill="#c6c6c6"/>
<rect x="1931.5" y="630.05" width="537.5" height="2.5" fill="#c6c6c6"/>
<rect x="1931.5" y="748.75" width="537.5" height="2.5" fill="#c6c6c6"/>
<rect x="1876" y="871.75" width="593" height="2.5" fill="#c6c6c6"/>
<rect x="1931.5" y="957.75" width="537.5" height="2.5" fill="#c6c6c6"/>
<rect x="1931.5" y="1077.05" width="537.5" height="2.5" fill="#c6c6c6"/>
<rect x="1876" y="1200.25" width="593" height="2.5" fill="#c6c6c6"/>
<rect x="1876" y="1319.75" width="593" height="2.5" fill="#c6c6c6"/>
<rect x="1876" y="1438.75" width="593" height="2.5" fill="#c6c6c6"/>
<rect x="1876" y="1555.75" width="593" height="2.5" fill="#c6c6c6"/>
<g stroke="#b3a37a"><use href="#star" transform="translate(1836.58 726.24) scale(0.1039)" /><use href="#hexbox" transform="translate(1926.39 1048.49) scale(0.1202)" /><use href="#visor" transform="translate(1611.87 962.86) scale(0.2174)" /><use href="#lid" transform="translate(1866.22 1201.23) scale(0.1350)" /></g><g stroke="#3a362c"><use href="#circ" transform="translate(676.19 52.48) scale(1.0888)" /><svg x="1875" y="1585" width="85" height="60" viewBox="941.9 1279 132.8 93.75" preserveAspectRatio="none" overflow="hidden"><use href="#dots"/></svg></g>
<use href="#penlines" transform="translate(1828.67 485.20) scale(0.11)" stroke="#d9d9d9" stroke-width="14"/>
<use href="#scorelines" transform="translate(1828.67 604.20) scale(0.11)" stroke="#dedede" stroke-width="14" stroke-dasharray="18 22"/>
<use href="#hexscore" transform="translate(1925.95 928.28) scale(0.1215)" stroke="#d6d6d6" stroke-width="13" stroke-dasharray="28 28"/>
<rect x="1798" y="1729" width="669" height="2.5" fill="#e4e4e4"/>
<rect x="1798" y="1731.5" width="702" height="134" fill="#f4f4f4"/>
<rect x="1827" y="1747.7" width="145" height="97.8" rx="5" fill="#fff" stroke="#6b6b6b" stroke-width="2.5"/>
<text x="2000.7" y="1807" font-family="Liberation Sans" font-size="28" fill="#232427" textLength="170.6" lengthAdjust="spacingAndGlyphs">Blank Canvas</text>
<rect x="1798" y="1864.6" width="702" height="136" fill="#d9d9d9"/>
<text x="1831" y="1976.3" font-family="Liberation Sans" font-size="28.6" fill="#a6a6a6" textLength="63" lengthAdjust="spacingAndGlyphs">Slice</text>
<text x="1958.8" y="1976.3" font-family="Liberation Sans" font-size="28.6" fill="#a6a6a6" textLength="61.5" lengthAdjust="spacingAndGlyphs">Weld</text>
<text x="2085" y="1976.3" font-family="Liberation Sans" font-size="28.6" fill="#a6a6a6" textLength="82" lengthAdjust="spacingAndGlyphs">Attach</text>
<text x="2230" y="1976.3" font-family="Liberation Sans" font-size="28.6" fill="#a6a6a6" textLength="86.8" lengthAdjust="spacingAndGlyphs">Flatten</text>
<text x="2380" y="1976.3" font-family="Liberation Sans" font-size="28.6" fill="#a6a6a6" textLength="104" lengthAdjust="spacingAndGlyphs">Contour</text>
<g fill="none" stroke="#979797" stroke-width="3.2" stroke-linejoin="miter"><path d="M1867.5 1894.8 A16.6 16.6 0 1 0 1843.7 1918.1"/><path d="M1855 1907 L1871.5 1907 A16.6 16.6 0 0 1 1855 1921.5 Z"/><path d="M1875 1907 L1884.7 1907 L1884.7 1934.7 L1854.7 1934.7 L1854.7 1928"/></g>
<path d="M1998.9 1907 A17.3 17.3 0 1 0 1980.9 1922 L1980.9 1935.4 L2011.6 1935.4 L2011.6 1907 Z" fill="none" stroke="#979797" stroke-width="3.2"/>
<path d="M2140.4 1897.2 L2112 1897.2 A13.8 13.8 0 0 0 2112 1924.8 L2137.5 1924.8 A10.5 10.5 0 0 0 2137.5 1903.8 L2113.6 1903.8 A7.2 7.2 0 0 0 2113.6 1918.2 L2140 1918.2" fill="none" stroke="#979797" stroke-width="3.2"/>
<g fill="none" stroke="#979797" stroke-width="3.2" stroke-linejoin="miter"><path d="M2272.3 1885.8 L2272.3 1904.5 M2262.5 1895.2 L2272.3 1905 L2282.2 1895.2"/><path d="M2253 1903 L2249.5 1907.5 L2272.3 1921 L2295.2 1907.5 L2291.7 1903"/><path d="M2261 1913.4 L2249.5 1920.5 L2272.3 1934.5 L2295.2 1920.5 L2283.6 1913.4"/></g>
<circle cx="2431.2" cy="1912.6" r="25.8" fill="none" stroke="#979797" stroke-width="3.2" stroke-dasharray="12.3 8"/>
</svg>
</body></html>
